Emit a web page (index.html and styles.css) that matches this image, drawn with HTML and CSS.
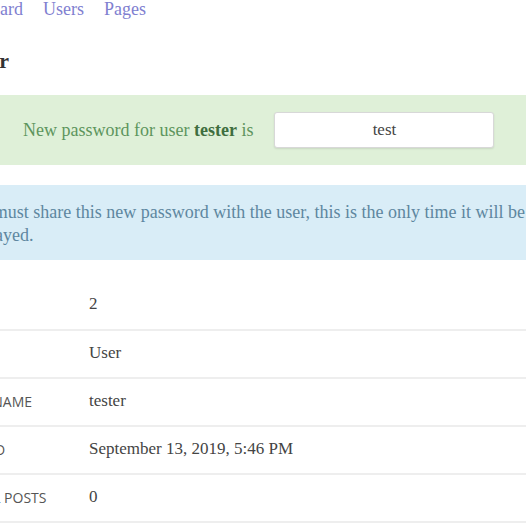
FILE: index.html
```html
<!DOCTYPE html>
<html>
<head>
<meta charset="utf-8">
<link rel="stylesheet" href="styles.css">
</head>
<body>
<div class="page">
  <nav class="nav">
    <a href="#">Dashboard</a>
    <a href="#">Users</a>
    <a href="#">Pages</a>
  </nav>
  <h1 class="title">User</h1>
  <div class="alert alert-success">
    <span class="alert-label">New password for user <strong>tester</strong> is</span>
    <div class="pw-box">test</div>
  </div>
  <div class="alert alert-info">You must share this new password with the user, this is the only time it will be displayed.</div>
  <table class="details">
    <tr><th>ID</th><td>2</td></tr>
    <tr><th>Role</th><td>User</td></tr>
    <tr><th>Username</th><td>tester</td></tr>
    <tr><th>Joined</th><td>September 13, 2019, 5:46 PM</td></tr>
    <tr><th>Total Posts</th><td>0</td></tr>
  </table>
</div>
</body>
</html>
```
FILE: styles.css
```css
* { box-sizing: border-box; }
html, body { margin: 0; padding: 0; background: #fff; overflow: hidden; }
body { font-family: "Liberation Serif", "Times New Roman", serif; color: #444; }
.page { margin-left: -55px; width: 640px; }
.nav { display: flex; gap: 20px; height: 19px; align-items: center; font-size: 18px; }
.nav a { color: #8080d0; text-decoration: none; }
.title { font-size: 22px; font-weight: bold; color: #333; margin: 31px 0 0 20px; line-height: 22px; }
.alert { padding: 15px; }
.alert-success { background: #dff0d8; color: #5d955d; margin-top: 23px; display: flex; align-items: center; height: 70px; font-size: 18px; padding-left: 78px; }
.alert-success strong { color: #3f6e3f; }
.pw-box { margin-left: 21px; width: 220px; height: 36px; background: #fff; border: 1px solid #d8d8d8; border-radius: 3px; display: flex; align-items: center; justify-content: center; color: #444; font-size: 17px; box-shadow: 0 1px 2px rgba(0,0,0,0.1); }
.alert-info { background: #d9edf7; color: #5e87a0; margin-top: 20px; height: 75px; font-size: 18px; line-height: 23px; padding: 16px 15px; }
.details { border-collapse: collapse; width: 100%; margin-top: 22px; }
.details tr { height: 48px; border-bottom: 2px solid #eeeeee; }
.details th { text-align: left; font-family: "Open Sans", sans-serif; font-weight: normal; text-transform: uppercase; font-size: 14px; color: #555; width: 143px; padding-left: 13px; padding-top: 0; }
.details td { font-size: 17px; color: #444; padding-bottom: 4px; }
```
